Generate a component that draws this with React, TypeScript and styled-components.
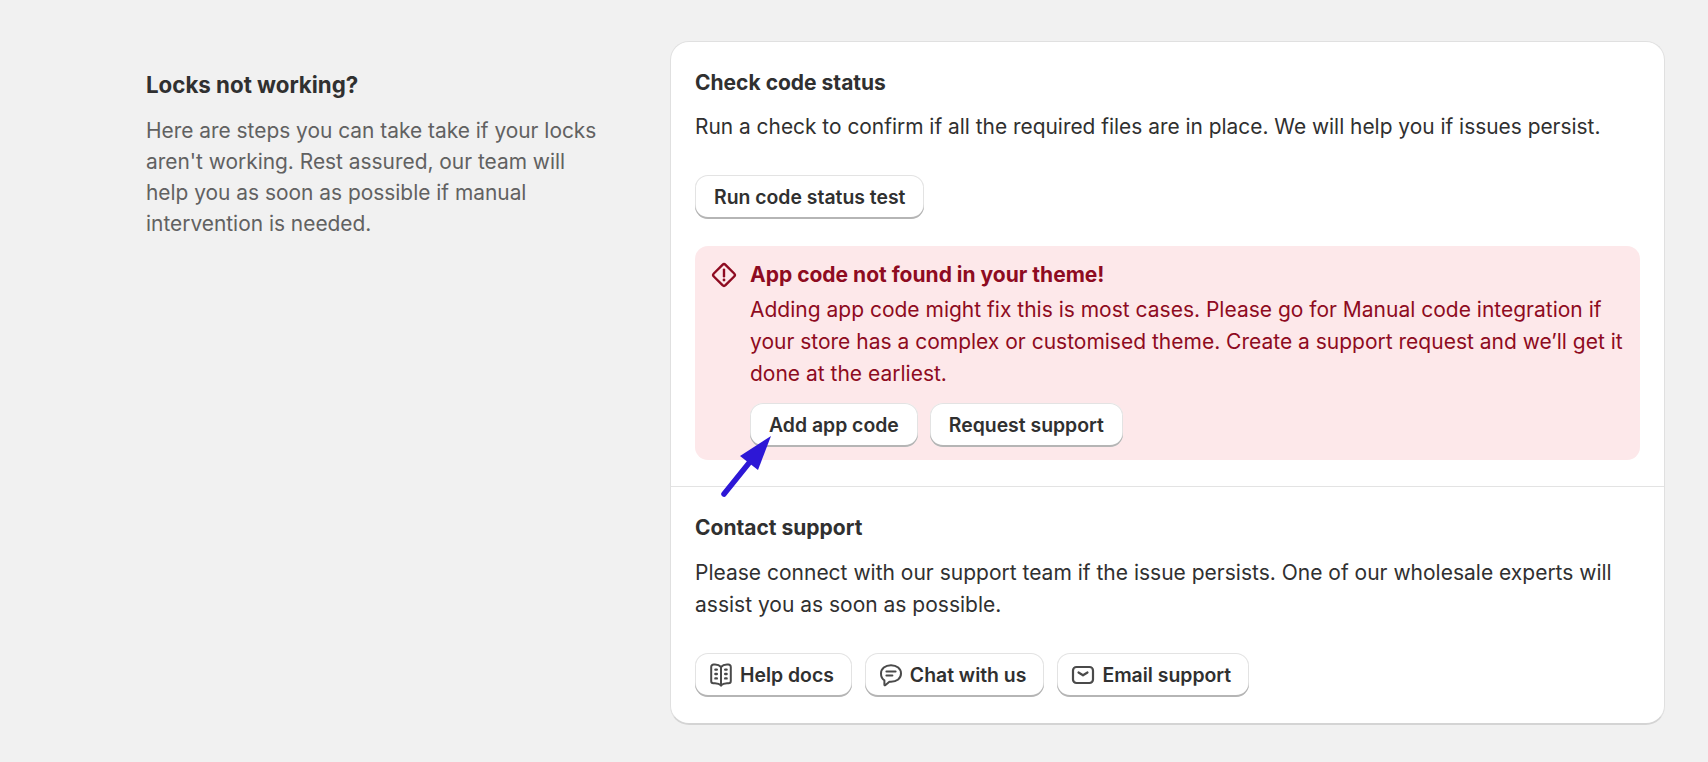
import styled, { createGlobalStyle } from "styled-components";

const GlobalStyle = createGlobalStyle`
  html, body {
    margin: 0;
    padding: 0;
    background: #f1f1f1;
  }
  body {
    font-family: "Inter", "Liberation Sans", sans-serif;
    color: #303030;
  }
  * {
    box-sizing: border-box;
  }
`;

const Page = styled.div`
  display: grid;
  grid-template-columns: 524px 995px;
  align-items: start;
  padding: 41px 0 37px 146px;
  min-height: 762px;
`;

const Intro = styled.aside`
  padding-top: 28px;
  width: 460px;
`;

const IntroTitle = styled.h2`
  margin: 0 0 14px;
  font-size: 22.3px;
  line-height: 32px;
  font-weight: 650;
`;

const IntroText = styled.p`
  margin: 0;
  font-size: 20.9px;
  line-height: 31px;
  color: #616161;
`;

const Card = styled.section`
  background: #fff;
  border-radius: 19px;
  border: 1px solid #e0e0e0;
  border-bottom: 2px solid #d4d4d4;
`;

const Section = styled.div<{ $divided?: boolean }>`
  padding: 25px 24px 26px;
  border-top: ${(p) => (p.$divided ? "1px solid #e3e3e3" : "none")};
`;

const SectionTitle = styled.h3<{ $gap: number }>`
  margin: 0 0 ${(p) => p.$gap}px;
  font-size: 21px;
  line-height: 32px;
  font-weight: 650;
`;

const Body = styled.p`
  margin: 0;
  font-size: 21px;
  line-height: 32px;
`;

const StatusText = styled(Body)`
  font-size: 20.9px;
`;

const ButtonRow = styled.div<{ $top: number; $gap?: number }>`
  display: flex;
  gap: ${(p) => p.$gap ?? 13}px;
  margin-top: ${(p) => p.$top}px;
`;

const Button = styled.button`
  display: inline-flex;
  align-items: center;
  gap: 7px;
  height: 44px;
  padding: 0 19px;
  border: none;
  border-radius: 13px;
  background: #fff;
  color: #303030;
  font-family: inherit;
  font-size: 19.4px;
  font-weight: 600;
  box-shadow: inset 0 -2px 0 #b5b5b5, inset 0 0 0 1px #e3e3e3;
`;

const IconButton = styled(Button)`
  padding: 0 18px 0 14px;
`;

const Banner = styled.div`
  position: relative;
  display: flex;
  gap: 13px;
  margin-top: 27px;
  padding: 13px 16px 13px 16px;
  border-radius: 13px;
  background: #fde8ea;
  color: #8e0b21;
`;

const BannerIcon = styled.svg`
  flex: none;
  width: 26px;
  height: 26px;
  margin-top: 3px;
`;

const BannerContent = styled.div`
  flex: 1;
`;

const BannerTitle = styled.div`
  margin-bottom: 3px;
  font-size: 21px;
  line-height: 32px;
  font-weight: 700;
`;

const Arrow = styled.svg`
  position: absolute;
  left: 21px;
  top: 183px;
  width: 64px;
  height: 72px;
  pointer-events: none;
`;

const ButtonIcon = styled.svg`
  width: 24px;
  height: 24px;
  flex: none;
`;

function DiamondAlert() {
  return (
    <BannerIcon viewBox="0 0 24 24" fill="none" stroke="#8e0b21" strokeWidth="2.2" strokeLinejoin="round">
      <path d="M10.6 2.6a2 2 0 0 1 2.8 0l8 8a2 2 0 0 1 0 2.8l-8 8a2 2 0 0 1-2.8 0l-8-8a2 2 0 0 1 0-2.8z" />
      <path d="M12 7v6.2" strokeLinecap="round" />
      <circle cx="12" cy="16.6" r="1.3" fill="#8e0b21" stroke="none" />
    </BannerIcon>
  );
}

function BookIcon() {
  return (
    <ButtonIcon viewBox="0 0 24 24" fill="none" stroke="#4a4a4a" strokeWidth="2" strokeLinejoin="round" strokeLinecap="round">
      <path d="M12 4C10.6 2.4 8.6 1.6 6 1.6H4.6A2.4 2.4 0 0 0 2.2 4v14a2.2 2.2 0 0 0 2.2 2.2H6c2.6 0 4.6.6 6 2.2 1.4-1.6 3.4-2.2 6-2.2h1.6a2.2 2.2 0 0 0 2.2-2.2V4a2.4 2.4 0 0 0-2.4-2.4H18c-2.6 0-4.6.8-6 2.4z" />
      <path d="M12 4v18.4" />
      <path d="M6.4 6.6h1.4M6.4 11h1.4M6.4 15.4h1.4M16.2 6.6h1.4M16.2 11h1.4M16.2 15.4h1.4" strokeWidth="2.4" />
    </ButtonIcon>
  );
}

function ChatIcon() {
  return (
    <ButtonIcon viewBox="0 0 24 24" fill="none" stroke="#4a4a4a" strokeWidth="2" strokeLinejoin="round" strokeLinecap="round">
      <path d="M12 2.2c5.8 0 10 3.4 10 8.4s-4.2 8.2-10 8.2h-1.6l-4.2 3.4c-.4.3-.8 0-.8-.4v-4.4C3 16 2 13.4 2 10.6c0-5 4.2-8.4 10-8.4z" />
      <path d="M7.4 8.4h9.2M7.4 12.6h6" />
    </ButtonIcon>
  );
}

function MailIcon() {
  return (
    <ButtonIcon viewBox="0 0 24 24" fill="none" stroke="#4a4a4a" strokeWidth="2.2" strokeLinejoin="round" strokeLinecap="round">
      <rect x="2" y="4" width="20" height="16" rx="3.5" />
      <path d="M7.5 9.5l4.5 2.8 4.5-2.8" />
    </ButtonIcon>
  );
}

export default function App() {
  return (
    <>
      <GlobalStyle />
      <Page>
        <Intro>
          <IntroTitle>Locks not working?</IntroTitle>
          <IntroText>
            Here are steps you can take take if your locks aren't working. Rest assured, our team will help you as
            soon as possible if manual intervention is needed.
          </IntroText>
        </Intro>
        <Card>
          <Section>
            <SectionTitle $gap={12}>Check code status</SectionTitle>
            <StatusText>
              Run a check to confirm if all the required files are in place. We will help you if issues persist.
            </StatusText>
            <ButtonRow $top={32}>
              <Button>Run code status test</Button>
            </ButtonRow>
            <Banner>
              <DiamondAlert />
              <BannerContent>
                <BannerTitle>App code not found in your theme!</BannerTitle>
                <Body>
                  Adding app code might fix this is most cases. Please go for Manual code integration if your store has
                  a complex or customised theme. Create a support request and we’ll get it done at the earliest.
                </Body>
                <ButtonRow $top={13} $gap={12}>
                  <Button>Add app code</Button>
                  <Button>Request support</Button>
                </ButtonRow>
              </BannerContent>
              <Arrow viewBox="0 0 64 72">
                <path d="M8 65L33 34" fill="none" stroke="#2d17d6" strokeWidth="5.5" strokeLinecap="round" />
                <path d="M55 7L24 27 42 41z" fill="#2d17d6" />
              </Arrow>
            </Banner>
          </Section>
          <Section $divided>
            <SectionTitle $gap={13}>Contact support</SectionTitle>
            <Body>
              Please connect with our support team if the issue persists. One of our wholesale experts will assist you
              as soon as possible.
            </Body>
            <ButtonRow $top={32}>
              <IconButton>
                <BookIcon />
                Help docs
              </IconButton>
              <IconButton>
                <ChatIcon />
                Chat with us
              </IconButton>
              <IconButton>
                <MailIcon />
                Email support
              </IconButton>
            </ButtonRow>
          </Section>
        </Card>
      </Page>
    </>
  );
}
